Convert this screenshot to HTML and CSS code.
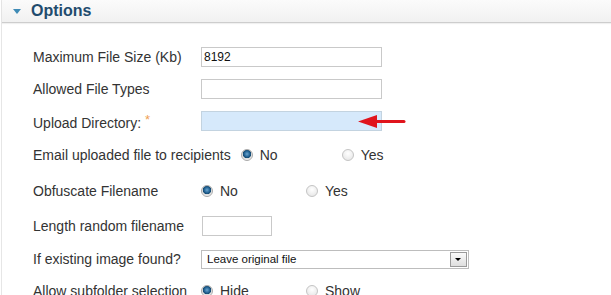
FILE: index.html
```html
<!DOCTYPE html>
<html lang="en">
<head>
    <meta charset="UTF-8">
    <meta name="viewport" content="width=device-width, initial-scale=1.0">
    <title>Options</title>
    <link rel="stylesheet" href="styles.css">
</head>
<body>

    <div class="panel">
        <div class="panel-head">
            <span class="toggle"></span>
            <h3>Options</h3>
        </div>
        <div class="panel-body">
            <div class="row">
                <label>Maximum File Size (Kb)</label>
                <input type="text" class="field" value="8192">
            </div>
            <div class="row">
                <label>Allowed File Types</label>
                <input type="text" class="field">
            </div>
            <div class="row">
                <label>Upload Directory: <span class="req">*</span></label>
                <div class="field-wrap">
                    <input type="text" class="field invalid">
                    <svg class="arrow" width="48" height="15" viewBox="0 0 48 15">
                        <polygon points="0,7.5 19,1 19,14" fill="#e0141c"/>
                        <line x1="17" y1="7.5" x2="46" y2="7.5" stroke="#e0141c" stroke-width="3" stroke-linecap="round"/>
                    </svg>
                </div>
            </div>
            <div class="row tall">
                <label>Email uploaded file to recipients</label>
                <span class="opt email"><span class="radio on"></span>No</span>
                <span class="opt"><span class="radio"></span>Yes</span>
            </div>
            <div class="row tall">
                <label>Obfuscate Filename</label>
                <span class="opt"><span class="radio on"></span>No</span>
                <span class="opt"><span class="radio"></span>Yes</span>
            </div>
            <div class="row mid">
                <label>Length random filename</label>
                <input type="text" class="field short">
            </div>
            <div class="row">
                <label>If existing image found?</label>
                <div class="select">
                    <span>Leave original file</span>
                    <span class="drop"></span>
                </div>
            </div>
            <div class="row">
                <label>Allow subfolder selection</label>
                <span class="opt"><span class="radio on"></span>Hide</span>
                <span class="opt"><span class="radio"></span>Show</span>
            </div>
        </div>
    </div>

</body>
</html>
```

FILE: styles.css
```css
body {
    margin: 0;
    font-family: "Liberation Sans", Arial, sans-serif;
    background: white;
    overflow: hidden;
}
.panel {
    border-left: 1px solid #e6e6e6;
    margin-left: 1px;
    height: 295px;
}
.panel-head {
    display: flex;
    align-items: center;
    height: 22px;
    background: linear-gradient(#fbfbfb, #f1f1f1);
    border-bottom: 1px solid #cdcdcd;
    box-shadow: 0 1px 1px rgba(0, 0, 0, 0.06);
    padding-left: 11px;
}
.toggle {
    width: 0;
    height: 0;
    border-left: 4px solid transparent;
    border-right: 4px solid transparent;
    border-top: 5px solid #3f8bb6;
    margin-right: 10px;
    margin-top: 1px;
}
h3 {
    margin: 0;
    font-size: 16px;
    color: #1f4c6e;
    line-height: 20px;
}
.panel-body {
    padding: 18px 0 0 31px;
}
.row {
    display: flex;
    align-items: center;
    height: 32px;
    font-size: 14px;
    color: #333;
}
.row.tall {
    height: 36px;
}
.row.mid {
    height: 34px;
}
.row label {
    min-width: 158px;
    padding-right: 10px;
}
.req {
    color: #ef9f55;
    font-size: 13px;
    vertical-align: 4px;
}
.field {
    box-sizing: border-box;
    width: 181px;
    height: 20px;
    border: 1px solid #c9c9c9;
    padding: 0 2px;
    font-family: "Liberation Sans", Arial, sans-serif;
    font-size: 12px;
    color: #111;
    margin: 0;
}
.field.invalid {
    background: #d6e9fb;
    border-color: #c3d3e0;
}
.field.short {
    width: 70px;
    margin-left: 1px;
}
.field-wrap {
    position: relative;
}
.arrow {
    position: absolute;
    left: 157px;
    top: 3px;
}
.opt {
    display: flex;
    align-items: center;
    width: 105px;
}
.opt.email {
    width: 101px;
}
.radio {
    box-sizing: border-box;
    width: 12px;
    height: 12px;
    border-radius: 50%;
    border: 1px solid #c4c4c4;
    background: radial-gradient(circle at 50% 35%, #ffffff, #e2e2e2);
    margin-right: 7px;
}
.radio.on {
    border-color: #a9a9a9;
    background: radial-gradient(circle at 50% 40%, #6aa6d0 0, #1f5e8f 3px, #14496f 4px, #dcdcdc 4.5px, #f4f4f4 6px);
}
.select {
    box-sizing: border-box;
    display: flex;
    align-items: center;
    justify-content: space-between;
    width: 268px;
    height: 19px;
    border: 1px solid #bdbdbd;
    padding: 0 1px 0 5px;
    font-size: 11.5px;
    color: #111;
}
.drop {
    box-sizing: border-box;
    position: relative;
    width: 17px;
    height: 15px;
    border: 1px solid #9a9a9a;
    background: linear-gradient(#fafafa, #dedede);
}
.drop::after {
    content: "";
    position: absolute;
    left: 4px;
    top: 5px;
    border-left: 3px solid transparent;
    border-right: 3px solid transparent;
    border-top: 3px solid #000;
}
```
